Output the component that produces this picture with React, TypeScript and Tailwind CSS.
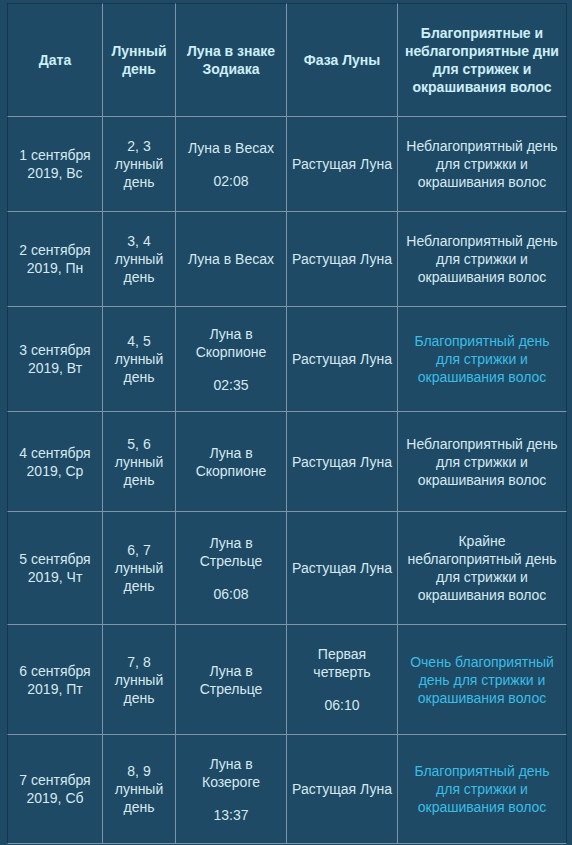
import React from 'react';

type Row = {
  height: string;
  date: [string, string];
  lunar: string;
  zodiac: string[];
  zodiacTime?: string;
  phase: string[];
  phaseTime?: string;
  verdict: string[];
  good: boolean;
};

const rows: Row[] = [
  {
    height: 'h-[95px]',
    date: ['1 сентября', '2019, Вс'],
    lunar: '2, 3',
    zodiac: ['Луна в Весах'],
    zodiacTime: '02:08',
    phase: ['Растущая Луна'],
    verdict: ['Неблагоприятный день', 'для стрижки и', 'окрашивания волос'],
    good: false,
  },
  {
    height: 'h-[95px]',
    date: ['2 сентября', '2019, Пн'],
    lunar: '3, 4',
    zodiac: ['Луна в Весах'],
    phase: ['Растущая Луна'],
    verdict: ['Неблагоприятный день', 'для стрижки и', 'окрашивания волос'],
    good: false,
  },
  {
    height: 'h-[105px]',
    date: ['3 сентября', '2019, Вт'],
    lunar: '4, 5',
    zodiac: ['Луна в', 'Скорпионе'],
    zodiacTime: '02:35',
    phase: ['Растущая Луна'],
    verdict: ['Благоприятный день', 'для стрижки и', 'окрашивания волос'],
    good: true,
  },
  {
    height: 'h-[100px]',
    date: ['4 сентября', '2019, Ср'],
    lunar: '5, 6',
    zodiac: ['Луна в', 'Скорпионе'],
    phase: ['Растущая Луна'],
    verdict: ['Неблагоприятный день', 'для стрижки и', 'окрашивания волос'],
    good: false,
  },
  {
    height: 'h-[113px]',
    date: ['5 сентября', '2019, Чт'],
    lunar: '6, 7',
    zodiac: ['Луна в', 'Стрельце'],
    zodiacTime: '06:08',
    phase: ['Растущая Луна'],
    verdict: ['Крайне', 'неблагоприятный день', 'для стрижки и', 'окрашивания волос'],
    good: false,
  },
  {
    height: 'h-[110px]',
    date: ['6 сентября', '2019, Пт'],
    lunar: '7, 8',
    zodiac: ['Луна в', 'Стрельце'],
    phase: ['Первая', 'четверть'],
    phaseTime: '06:10',
    verdict: ['Очень благоприятный', 'день для стрижки и', 'окрашивания волос'],
    good: true,
  },
  {
    height: 'h-[109px]',
    date: ['7 сентября', '2019, Сб'],
    lunar: '8, 9',
    zodiac: ['Луна в', 'Козероге'],
    zodiacTime: '13:37',
    phase: ['Растущая Луна'],
    verdict: ['Благоприятный день', 'для стрижки и', 'окрашивания волос'],
    good: true,
  },
];

function Lines({ lines }: { lines: string[] }) {
  return (
    <div>
      {lines.map((l, i) => (
        <div key={i}>{l}</div>
      ))}
    </div>
  );
}

function Cell({
  children,
  height,
  first,
  last,
  top,
  className = '',
}: {
  children: React.ReactNode;
  height: string;
  first?: boolean;
  last?: boolean;
  top?: boolean;
  className?: string;
}) {
  return (
    <div
      className={[
        'flex flex-col items-center justify-center text-center border-b border-[#7d95a6]',
        height,
        first ? 'border-l border-l-[#15364d]' : '',
        last ? 'border-r border-r-[#15364d]' : 'border-r',
        top ? 'border-t border-t-[#15364d]' : '',
        className,
      ].join(' ')}
    >
      {children}
    </div>
  );
}

export default function App() {
  return (
    <div
      className="h-[845px] w-[572px] overflow-hidden bg-[#1e4a66] pl-[7px] pt-[3px] text-[14px] leading-[18px] text-[#d6e9ef]"
      style={{ fontFamily: '"Liberation Sans", Arial, sans-serif' }}
    >
      <div className="grid w-[560px] grid-cols-[96px_73px_111px_111px_169px]">
        {/* header */}
        <Cell height="h-[114px]" first top className="font-bold text-[#cdeef5]">
          Дата
        </Cell>
        <Cell height="h-[114px]" top className="font-bold text-[#cdeef5]">
          <Lines lines={['Лунный', 'день']} />
        </Cell>
        <Cell height="h-[114px]" top className="font-bold text-[#cdeef5]">
          <Lines lines={['Луна в знаке', 'Зодиака']} />
        </Cell>
        <Cell height="h-[114px]" top className="font-bold text-[#cdeef5]">
          Фаза Луны
        </Cell>
        <Cell height="h-[114px]" top last className="font-bold text-[#cdeef5]">
          <Lines
            lines={['Благоприятные и', 'неблагоприятные дни', 'для стрижек и', 'окрашивания волос']}
          />
        </Cell>

        {rows.map((r, i) => (
          <React.Fragment key={i}>
            <Cell height={r.height} first>
              <Lines lines={r.date} />
            </Cell>
            <Cell height={r.height}>
              <Lines lines={[r.lunar, 'лунный', 'день']} />
            </Cell>
            <Cell height={r.height}>
              <Lines lines={r.zodiac} />
              {r.zodiacTime && <div className="mt-[15px]">{r.zodiacTime}</div>}
            </Cell>
            <Cell height={r.height}>
              <Lines lines={r.phase} />
              {r.phaseTime && <div className="mt-[15px]">{r.phaseTime}</div>}
            </Cell>
            <Cell height={r.height} last className={r.good ? 'text-[#3bbde4]' : ''}>
              <Lines lines={r.verdict} />
            </Cell>
          </React.Fragment>
        ))}
      </div>
    </div>
  );
}
